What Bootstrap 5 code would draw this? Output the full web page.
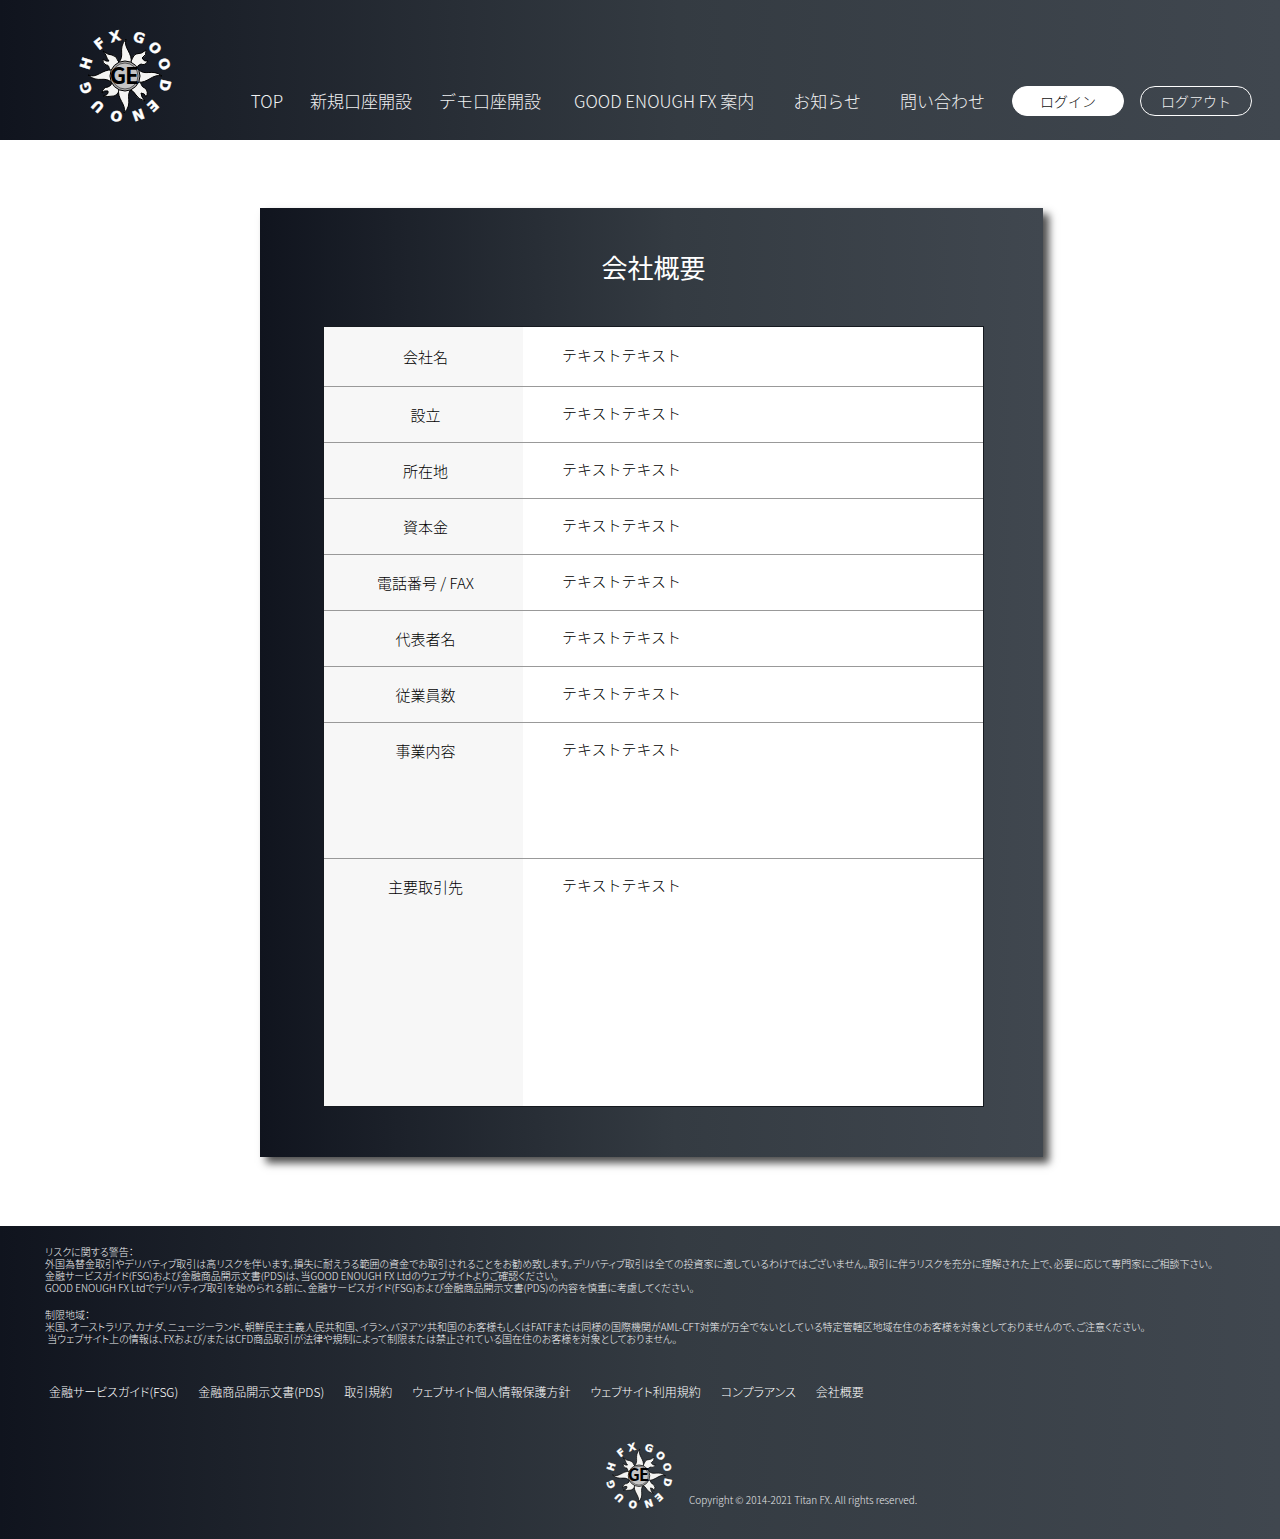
<!DOCTYPE html>
<html lang="ja">
<head>
<meta charset="utf-8">
<meta name="viewport" content="width=device-width, initial-scale=1">
<title>会社概要 | GOOD ENOUGH FX</title>
<link href="https://cdn.jsdelivr.net/npm/bootstrap@5.3.0/dist/css/bootstrap.min.css" rel="stylesheet">
<style>
  body { font-family: "Noto Sans CJK JP", sans-serif; font-weight: 300; font-size: 15px; color: #000; background: #fff; }
  .ink-gradient { background: linear-gradient(90deg, #10141e 0%, #343b42 53%, #40474f 100%); color: #fff; }
  .site-header { min-height: 140px; padding: 15px 28px 0 65px; }
  .site-logo { width: 120px; height: 120px; }
  .main-nav { font-size: 17px; line-height: 24px; gap: 12px 27px; padding-bottom: 24px; color: #f0f1f2; }
  .main-nav a, .foot-links a { color: inherit; text-decoration: none; }
  .wide-gap { margin-left: 6px; }
  .wider-gap { margin-left: 12px; }
  .pill { width: 112px; height: 30px; padding: 0; font-size: 14px; line-height: 26px; font-weight: 300; border: 1px solid #fff; }
  .pill-solid { background: #fff; color: #111; }
  .pill-line { background: transparent; color: #f0f1f2; }
  .pills { gap: 16px; }
  .main-area { padding: 68px 0 69px 23px; }
  .panel { max-width: 783px; padding: 40px 60px 51px 64px; box-shadow: 6px 6px 8px rgba(0, 0, 0, .7); }
  .panel h1 { font-size: 26px; line-height: 38px; font-weight: 400; margin-bottom: 41px; }
  .profile { background: #fff; color: #000; outline: 1px solid #15191f; line-height: 23px; }
  .profile th { width: 199px; background: #f7f7f7; font-weight: 300; text-align: center; padding: 16px 0 16px 4px; }
  .profile td { padding: 14px 0 18px 39px; }
  .profile tr + tr { border-top: 1px solid #999; }
  .profile tr:first-child { height: 59px; }
  .row-business { height: 136px; }
  .row-clients { height: 248px; }
  .site-footer { padding: 20px 45px 21px; }
  .notice { font-size: 10px; line-height: 12px; color: #f0f1f2; font-feature-settings: "palt"; }
  .notice p { margin-bottom: 15px; }
  .foot-links { font-size: 12px; line-height: 18px; gap: 8px 20px; padding-left: 4px; margin-top: 38px; font-feature-settings: "palt"; }
  .foot-brand { margin-top: 31px; padding-left: 551px; }
  .foot-brand svg { width: 86px; height: 86px; }
  .foot-brand small { font-size: 10px; line-height: 14px; color: #e4e6e8; padding-bottom: 11px; margin-left: 7px; }
</style>
<script src="https://cdn.jsdelivr.net/npm/bootstrap@5.3.0/dist/js/bootstrap.bundle.min.js"></script>
</head>
<body>

<svg width="0" height="0" class="d-none" aria-hidden="true">
  <symbol id="sun-logo" viewBox="0 0 120 120">
    <g fill="#fff" stroke="#fff" stroke-width=".4" font-family="DejaVu Sans" font-weight="700" font-size="14" text-anchor="middle">
      <text x="60" y="25" transform="rotate(20 60 61)">G</text>
      <text x="60" y="25" transform="rotate(47 60 61)">O</text>
      <text x="60" y="25" transform="rotate(73 60 61)">O</text>
      <text x="60" y="25" transform="rotate(103 60 61)">D</text>
      <text x="60" y="25" transform="rotate(137 60 61)">E</text>
      <text x="60" y="25" transform="rotate(161 60 61)">N</text>
      <text x="60" y="25" transform="rotate(192 60 61)">O</text>
      <text x="60" y="25" transform="rotate(222 60 61)">U</text>
      <text x="60" y="25" transform="rotate(253 60 61)">G</text>
      <text x="60" y="25" transform="rotate(288 60 61)">H</text>
      <text x="60" y="25" transform="rotate(322 60 61)">F</text>
      <text x="60" y="25" transform="rotate(346 60 61)">X</text>
    </g>
    <g fill="#f4f4f2" stroke="#000" stroke-width="1">
      <path d="M46 56C43 53 45 50 41 50Q37 48 38 44Q41 47 44 46C41 43 42 40 38 36Q43 40 47 40Q52 41 53 46L56 49Z"/>
      <path d="M64 49C68 45 67 41 71 39Q77 39 81 35Q82 40 77 43Q79 47 83 46Q80 51 76 49Q72 50 72 54Z"/>
      <path d="M74 66C77 69 76 72 80 73Q84 77 81 82Q80 78 76 78Q76 82 80 86Q73 84 71 80Q69 76 64 74Z"/>
      <path d="M57 73C53 76 53 80 49 81Q42 82 38 81Q44 80 43 76Q39 75 37 78Q38 72 43 72Q47 71 47 66Z"/>
      <path d="M53 48C61 41 52 34 61 24C58 33 68 38 66 48Z"/>
      <path d="M73 54C80 62 87 53 97 61C88 58 82 69 73 67Z"/>
      <path d="M67 73C59 81 69 88 59 98C62 89 51 84 54 73Z"/>
      <path d="M47 68C40 60 33 69 23 60C32 64 37 54 47 55Z"/>
    </g>
    <circle cx="60" cy="61" r="15" fill="#aaa" stroke="#000"/>
    <circle cx="60" cy="61" r="13" fill="#c4c4c4" stroke="#555"/>
    <g font-family="Noto Sans CJK JP" font-weight="700" font-size="23" fill="#000" text-anchor="middle">
      <text x="53" y="69">G</text>
      <text x="67" y="69">E</text>
    </g>
  </symbol>
</svg>

<header class="site-header ink-gradient d-flex flex-wrap justify-content-between">
  <a href="#" aria-label="GOOD ENOUGH FX"><svg class="site-logo d-block" aria-hidden="true"><use href="#sun-logo"/></svg></a>
  <nav class="main-nav d-flex flex-wrap align-items-center align-self-end">
    <a href="#">TOP</a>
    <a href="#">新規口座開設</a>
    <a href="#">デモ口座開設</a>
    <a href="#" class="wide-gap">GOOD ENOUGH FX 案内</a>
    <a href="#" class="wider-gap">お知らせ</a>
    <a href="#" class="wider-gap">問い合わせ</a>
    <div class="pills d-flex">
      <button type="button" class="pill pill-solid btn rounded-pill">ログイン</button>
      <button type="button" class="pill pill-line btn rounded-pill">ログアウト</button>
    </div>
  </nav>
</header>

<main class="main-area">
  <section class="panel ink-gradient mx-auto">
    <h1 class="text-center">会社概要</h1>
    <table class="profile w-100">
      <tbody>
        <tr><th scope="row">会社名</th><td>テキストテキスト</td></tr>
        <tr><th scope="row">設立</th><td>テキストテキスト</td></tr>
        <tr><th scope="row">所在地</th><td>テキストテキスト</td></tr>
        <tr><th scope="row">資本金</th><td>テキストテキスト</td></tr>
        <tr><th scope="row">電話番号 / FAX</th><td>テキストテキスト</td></tr>
        <tr><th scope="row">代表者名</th><td>テキストテキスト</td></tr>
        <tr><th scope="row">従業員数</th><td>テキストテキスト</td></tr>
        <tr class="row-business align-top"><th scope="row">事業内容</th><td>テキストテキスト</td></tr>
        <tr class="row-clients align-top"><th scope="row">主要取引先</th><td>テキストテキスト</td></tr>
      </tbody>
    </table>
  </section>
</main>

<footer class="site-footer ink-gradient">
  <div class="notice">
    <p>リスクに関する警告：<br>
    外国為替金取引やデリバティブ取引は高リスクを伴います。損失に耐えうる範囲の資金でお取引されることをお勧め致します。デリバティブ取引は全ての投資家に適しているわけではございません。取引に伴うリスクを充分に理解された上で、必要に応じて専門家にご相談下さい。<br>
    金融サービスガイド(FSG)および金融商品開示文書(PDS)は、当GOOD ENOUGH FX Ltdのウェブサイトよりご確認ください。<br>
    GOOD ENOUGH FX Ltdでデリバティブ取引を始められる前に、金融サービスガイド(FSG)および金融商品開示文書(PDS)の内容を慎重に考慮してください。</p>
    <p class="mb-0">制限地域：<br>
    米国、オーストラリア、カナダ、ニュージーランド、朝鮮民主主義人民共和国、イラン、バヌアツ共和国のお客様もしくはFATFまたは同様の国際機関がAML-CFT対策が万全でないとしている特定管轄区地域在住のお客様を対象としておりませんので、ご注意ください。<br>
    &nbsp;当ウェブサイト上の情報は、FXおよび/またはCFD商品取引が法律や規制によって制限または禁止されている国在住のお客様を対象としておりません。</p>
  </div>
  <nav class="foot-links d-flex flex-wrap">
    <a href="#">金融サービスガイド(FSG)</a>
    <a href="#">金融商品開示文書(PDS)</a>
    <a href="#">取引規約</a>
    <a href="#">ウェブサイト個人情報保護方針</a>
    <a href="#">ウェブサイト利用規約</a>
    <a href="#">コンプラアンス</a>
    <a href="#">会社概要</a>
  </nav>
  <div class="foot-brand d-flex align-items-end">
    <svg aria-hidden="true"><use href="#sun-logo"/></svg>
    <small>Copyright © 2014-2021 Titan FX. All rights reserved.</small>
  </div>
</footer>
</body>
</html>
